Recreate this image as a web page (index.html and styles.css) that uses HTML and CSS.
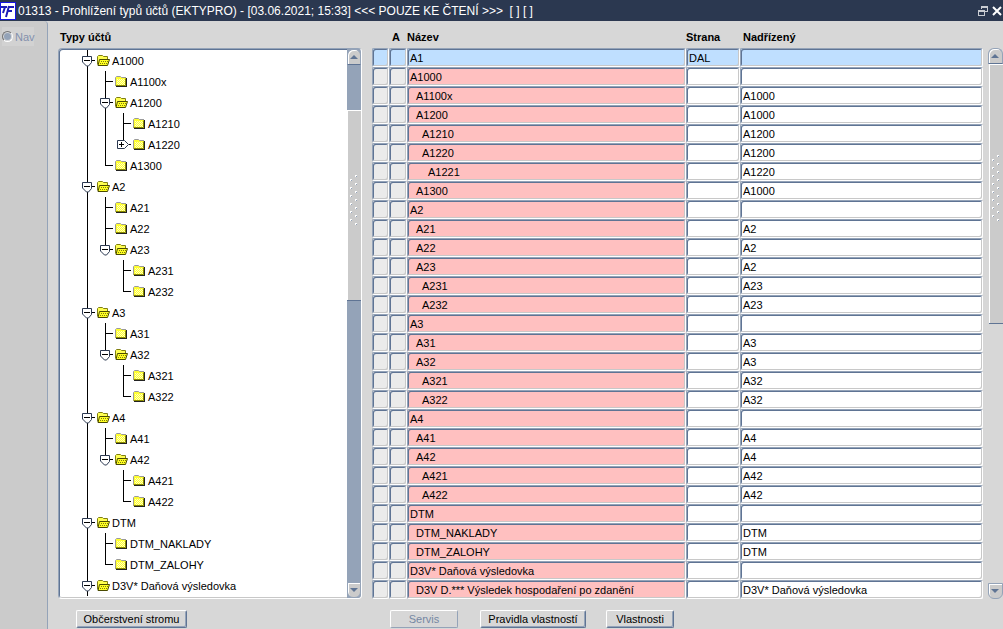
FILE: index.html
```html
<!DOCTYPE html>
<html lang="cs">
<head>
  <meta charset="UTF-8" />
  <meta name="viewport" content="width=device-width, initial-scale=1.0"/>
  <title>Prohlížení typů účtů</title>
  <link rel="stylesheet" href="styles.css">
</head>
<body>
  <svg class="symbols" aria-hidden="true">
    <symbol id="line" viewBox="0 0 18 21">
      <path d="M9 0h1v21h-1z"/>
    </symbol>
    <symbol id="tee" viewBox="0 0 18 21">
      <path d="M9 0h1v21h-1zM9 10h8v1h-8z"/>
    </symbol>
    <symbol id="end" viewBox="0 0 18 21">
      <path d="M9 0h1v11h-1zM9 10h8v1h-8z"/>
    </symbol>
    <symbol id="minus" viewBox="0 0 18 21">
      <path d="M4.500 6.500h9v6l-3 3.500h-2l-4-4z" fill="#fff" stroke="#2b3850"/>
      <path d="M6 10h6v1h-6zM14 10h3v1h-3z"/>
    </symbol>
    <symbol id="plus" viewBox="0 0 18 21">
      <path d="M3.500 6.500h7l4 4-4 4h-7z" fill="#fff" stroke="#2b3850"/>
      <path d="M5 10h5v1h-5zM7 8h1v5h-1zM15 10h2v1h-2z"/>
    </symbol>
    <symbol id="closed" viewBox="0 0 14 21">
      <path d="M2 6h10v9h-10z" fill="#ffff30"/>
      <path d="M3 8.500h8M3 10.500h8M3 12.500h8" stroke="#ffffc0" stroke-dasharray="1 1"/>
      <path d="M4 9.500h8M4 11.500h8M4 13.500h8" stroke="#ffffc0" stroke-dasharray="1 1"/>
      <path d="M1.500 14.500v-8l1-1h4l1 1h4.500" fill="none" stroke="#9a9a9a"/>
      <path d="M1.500 14.500h10v-7" fill="none" stroke="#8a8a00"/>
      <path d="M2 15h11v1h-11zM12 7h1v9h-1z" fill="#222"/>
    </symbol>
    <symbol id="open" viewBox="0 0 14 21">
      <path d="M2 6h9v9h-9z" fill="#ffff50"/>
      <path d="M1.500 14.500v-8l1-1h4l1 1h4v3" fill="none" stroke="#807f10"/>
      <path d="M3.500 9.500h10l-2 6h-9.500z" fill="#ffff20" stroke="#4a4a00"/>
      <path d="M5 11.500h7M4 13.500h7" stroke="#807f10" stroke-dasharray="1 1"/>
    </symbol>
    <symbol id="grip" viewBox="0 0 8 66">
      <path d="M6 0v66" stroke="#fff" stroke-width="2" stroke-dasharray="2 6"/>
      <path d="M1 4v62" stroke="#fff" stroke-width="2" stroke-dasharray="2 6"/>
      <path d="M6.500 1v65" stroke="#94a3b8" stroke-dasharray="1 7"/>
      <path d="M1.500 5v61" stroke="#94a3b8" stroke-dasharray="1 7"/>
    </symbol>
  </svg>

  <header class="titlebar">
    <svg class="logo" width="16" height="18" viewBox="0 0 16 18" aria-hidden="true">
      <path d="M0 0h16v18h-16z" fill="#1515e0"/>
      <path d="M1 1h14v16h-14z" fill="#fff"/>
      <path d="M1 5h6M5 5L3 11" stroke="#1a1ab8" stroke-width="2" fill="none"/>
      <path d="M9 4L6 15M8 5h6M8 9h4" stroke="#1a1ab8" stroke-width="2" fill="none"/>
    </svg>
    <h1>01313 - Prohlížení typů účtů (EKTYPRO) - [03.06.2021; 15:33] &lt;&lt;&lt; POUZE KE ČTENÍ &gt;&gt;&gt;&nbsp; [ ] [ ]</h1>
    <button type="button" class="win-btn" aria-label="Obnovit">
      <svg width="10" height="10" viewBox="0 0 10 10">
        <path d="M3 0h7v6h-3v-1h2v-3h-5v1h-1z" fill="#c9ccd2"/>
        <path d="M0 4h7v6h-7zM1 6v3h5v-3z" fill="#c9ccd2" fill-rule="evenodd"/>
      </svg>
    </button>
    <button type="button" class="win-btn" aria-label="Zavřít">
      <svg width="10" height="10" viewBox="0 0 10 10">
        <path d="M1 1l8 8M9 1l-8 8" stroke="#fff" stroke-width="2"/>
      </svg>
    </button>
  </header>

  <div class="workspace">
    <aside class="sidebar">
      <label class="nav-option">
        <input type="radio" name="mode" disabled checked>
        Nav
      </label>
    </aside>

    <main class="content">
      <div class="panels">
        <section class="tree-panel">
          <h2>Typy účtů</h2>
          <div class="tree-box">
            <ul class="tree" id="tree"></ul>
            <div class="scrollbar">
              <button type="button" class="arrow up" aria-label="Nahoru"></button>
              <div class="track">
                <div class="thumb">
                  <svg width="8" height="50" viewBox="0 0 8 50" aria-hidden="true"><use href="#grip" width="8" height="66"/></svg>
                </div>
              </div>
              <button type="button" class="arrow down" aria-label="Dolů"></button>
            </div>
          </div>
        </section>

        <section class="table-panel">
          <table>
            <colgroup>
              <col class="col-mark"><col class="col-flag"><col class="col-name"><col class="col-side"><col>
            </colgroup>
            <thead>
              <tr><th></th><th>A</th><th>Název</th><th>Strana</th><th>Nadřízený</th></tr>
            </thead>
            <tbody id="rows"></tbody>
          </table>
          <div class="scrollbar plain">
            <button type="button" class="arrow up" aria-label="Nahoru"></button>
            <div class="track">
              <div class="thumb">
                <svg width="8" height="66" viewBox="0 0 8 66" aria-hidden="true"><use href="#grip" width="8" height="66"/></svg>
              </div>
            </div>
            <button type="button" class="arrow down" aria-label="Dolů"></button>
          </div>
        </section>
      </div>

      <footer class="actions">
        <button type="button" class="btn refresh">Občerstvení stromu</button>
        <button type="button" class="btn service" disabled>Servis</button>
        <button type="button" class="btn rules">Pravidla vlastností</button>
        <button type="button" class="btn props">Vlastnosti</button>
      </footer>
    </main>
  </div>

  <script>
    // guides + joint, folder, label
    const nodes = [
      ['-', 'open', 'A1000'],
      ['LT', 'closed', 'A1100x'],
      ['LM', 'open', 'A1200'],
      ['LLT', 'closed', 'A1210'],
      ['LLP', 'closed', 'A1220'],
      ['LE', 'closed', 'A1300'],
      ['-', 'open', 'A2'],
      ['LT', 'closed', 'A21'],
      ['LT', 'closed', 'A22'],
      ['LN', 'open', 'A23'],
      ['L T', 'closed', 'A231'],
      ['L E', 'closed', 'A232'],
      ['-', 'open', 'A3'],
      ['LT', 'closed', 'A31'],
      ['LN', 'open', 'A32'],
      ['L T', 'closed', 'A321'],
      ['L E', 'closed', 'A322'],
      ['-', 'open', 'A4'],
      ['LT', 'closed', 'A41'],
      ['LN', 'open', 'A42'],
      ['L T', 'closed', 'A421'],
      ['L E', 'closed', 'A422'],
      ['-', 'open', 'DTM'],
      ['LT', 'closed', 'DTM_NAKLADY'],
      ['LE', 'closed', 'DTM_ZALOHY'],
      ['-', 'open', 'D3V* Daňová výsledovka']
    ];

    // level, name, side, parent
    const rows = [
      [0, 'A1', 'DAL', ''],
      [0, 'A1000', '', ''],
      [1, 'A1100x', '', 'A1000'],
      [1, 'A1200', '', 'A1000'],
      [2, 'A1210', '', 'A1200'],
      [2, 'A1220', '', 'A1200'],
      [3, 'A1221', '', 'A1220'],
      [1, 'A1300', '', 'A1000'],
      [0, 'A2', '', ''],
      [1, 'A21', '', 'A2'],
      [1, 'A22', '', 'A2'],
      [1, 'A23', '', 'A2'],
      [2, 'A231', '', 'A23'],
      [2, 'A232', '', 'A23'],
      [0, 'A3', '', ''],
      [1, 'A31', '', 'A3'],
      [1, 'A32', '', 'A3'],
      [2, 'A321', '', 'A32'],
      [2, 'A322', '', 'A32'],
      [0, 'A4', '', ''],
      [1, 'A41', '', 'A4'],
      [1, 'A42', '', 'A4'],
      [2, 'A421', '', 'A42'],
      [2, 'A422', '', 'A42'],
      [0, 'DTM', '', ''],
      [1, 'DTM_NAKLADY', '', 'DTM'],
      [1, 'DTM_ZALOHY', '', 'DTM'],
      [0, 'D3V* Daňová výsledovka', '', ''],
      [1, 'D3V D.*** Výsledek hospodaření po zdanění', '', 'D3V* Daňová výsledovka']
    ];

    const use = id => `<use href="#${id}" width="18" height="21"/>`;
    const cell = inner => `<svg width="18" height="21">${inner}</svg>`;
    const handle = (inner, label) =>
      `<button type="button" class="handle" aria-label="${label}">${cell(inner)}</button>`;
    const half = '<path d="M9 0h1v11h-1z"/>';

    const parts = {
      'L': cell(use('line')),
      ' ': cell(''),
      'T': cell(use('tee')),
      'E': cell(use('end')),
      '-': handle(use('line') + use('minus'), 'Sbalit'),
      'M': handle(use('line') + use('minus'), 'Sbalit'),
      'N': handle(half + use('minus'), 'Sbalit'),
      'P': handle(half + use('plus'), 'Rozbalit')
    };

    document.getElementById('tree').innerHTML = nodes.map(([guides, icon, text]) => {
      const lines = [...guides].map(c => parts[c]).join('');
      return `<li>${lines}<svg width="14" height="21"><use href="#${icon}" width="14" height="21"/></svg><span>${text}</span></li>`;
    }).join('');

    document.getElementById('rows').innerHTML = rows.map(([level, name, side, parent], i) =>
      `<tr class="${i === 0 ? 'current' : ''}"><td class="mark"></td><td class="mark"></td>` +
      `<td class="name level-${level}">${name}</td><td>${side}</td><td>${parent}</td></tr>`
    ).join('');
  </script>
</body>
</html>
```
FILE: styles.css
```css
* {
  box-sizing: border-box;
  margin: 0;
  padding: 0;
}

body {
  font-family: "Liberation Sans", Arial, sans-serif;
  font-size: 11px;
  color: #000;
  background: #d7d7d7;
  min-height: 100vh;
  display: flex;
  flex-direction: column;
}

button {
  font: inherit;
  border: none;
  background: none;
}

svg {
  display: block;
  flex: none;
}

.symbols {
  position: absolute;
  width: 0;
  height: 0;
}

.titlebar {
  display: flex;
  align-items: center;
  height: 21px;
  background: #2b3850;
  color: #fff;
}

.titlebar h1 {
  flex: 1;
  margin-left: 2px;
  font-size: 12px;
  font-weight: normal;
  white-space: nowrap;
}

.win-btn {
  width: 16px;
  height: 20px;
  display: flex;
  flex: none;
  align-items: center;
  justify-content: center;
}

.win-btn:last-child {
  width: 12px;
}

.workspace {
  flex: 1;
  display: flex;
}

.sidebar {
  width: 48px;
  flex: none;
  padding: 6px 0 0 2px;
  background: #cbcbcb;
  border-right: 1px solid #94a3b8;
  border-top-right-radius: 4px;
}

.nav-option {
  display: flex;
  align-items: center;
  gap: 2px;
  width: 32px;
  height: 19px;
  background: #d2d2d2;
  color: #8290ad;
}

.nav-option input {
  appearance: none;
  flex: none;
  width: 11px;
  height: 11px;
  border: 1px solid #777;
  border-right-color: #fff;
  border-bottom-color: #fff;
  border-radius: 50%;
  background: #94a3b8;
  box-shadow: inset 0 0 0 1px #d7d7d7;
}

.content {
  flex: 1;
  min-width: 0;
  padding: 6px 0 0 10px;
}

.panels {
  display: flex;
  gap: 10px;
}

.tree-panel {
  flex: none;
  width: 304px;
  display: flex;
  flex-direction: column;
}

.tree-panel h2,
th {
  height: 21px;
  line-height: 21px;
  font-size: 11px;
  font-weight: bold;
  text-align: left;
}

.tree-panel h2 {
  padding-left: 2px;
}

.tree-box {
  flex: 1;
  display: flex;
  overflow: hidden;
  background: #fff;
  border: 1px solid #fff;
  border-top-color: #94a3b8;
  border-left-color: #94a3b8;
  border-radius: 4px;
  box-shadow: inset 1px 1px 0 #5f7494, inset 0 -1px 0 #c8c8c8;
}

.tree {
  flex: 1;
  list-style: none;
  padding: 1px 0 0 19px;
}

.tree li {
  display: flex;
  height: 21px;
  line-height: 22px;
  white-space: nowrap;
}

.tree span {
  padding-left: 2px;
}

.handle {
  width: 18px;
  height: 21px;
  cursor: pointer;
}

.scrollbar {
  flex: none;
  width: 14px;
  display: flex;
  flex-direction: column;
  background: #94a3b8;
}

.arrow {
  position: relative;
  height: 16px;
  background: #cbcbcb;
  border: 1px solid #94a3b8;
  box-shadow: inset 1px 1px 0 #fff;
}

.arrow.up {
  border-bottom-color: #5f7494;
  border-radius: 6px 6px 0 0;
}

.arrow.down {
  border-radius: 0 0 6px 6px;
}

.arrow::after {
  content: "";
  position: absolute;
  left: 2px;
  top: 5px;
  border: 4px solid transparent;
}

.arrow.up::after {
  border-top: none;
  border-bottom-color: #5f7494;
}

.arrow.down::after {
  border-bottom: none;
  border-top-color: #5f7494;
}

.track {
  flex: 1;
}

.thumb {
  display: flex;
  align-items: center;
  justify-content: center;
  height: 37%;
  margin-top: 45px;
  padding-bottom: 10px;
  background: #cbcbcb;
  border-bottom: 1px solid #5f7494;
  box-shadow: inset 1px 1px 0 #fff;
}

.plain {
  width: 15px;
  margin: 21px 0 0 5px;
  background: none;
}

.plain .thumb {
  height: 50%;
  margin-top: 0;
  margin-left: 1px;
}

.table-panel {
  flex: 1;
  min-width: 0;
  display: flex;
}

table {
  flex: 1;
  width: 100%;
  table-layout: fixed;
  border-collapse: separate;
  border-spacing: 0;
}

.col-mark {
  width: 17px;
}

.col-flag {
  width: 18px;
}

.col-name {
  width: 279px;
}

.col-side {
  width: 54px;
}

th:nth-child(2),
th:last-child {
  padding-left: 3px;
}

td {
  height: 19px;
  padding: 1px 0 0 2px;
  line-height: 16px;
  white-space: nowrap;
  overflow: hidden;
  background: #fff;
  border: 1px solid #fff;
  border-top-color: #94a3b8;
  border-left-color: #94a3b8;
  border-radius: 2px;
  box-shadow: inset 1px 1px 0 #5f7494, inset -1px -1px 0 #c8c8c8;
}

.mark {
  background: #ebebeb;
}

.name {
  background: #ffc0c0;
}

.level-1 {
  padding-left: 8px;
}

.level-2 {
  padding-left: 14px;
}

.level-3 {
  padding-left: 20px;
}

.current td {
  background: #bfdfff;
}

.actions {
  display: flex;
  padding: 11px 0 1px 18px;
}

.btn {
  height: 18px;
  line-height: 16px;
  background: #d7d7d7;
  border: 1px solid #5f7494;
  border-top-color: #fff;
  border-left-color: #fff;
  border-radius: 2px;
  box-shadow: inset -1px -1px 0 #94a3b8;
}

.btn:disabled {
  color: #7587a3;
  border-right-color: #94a3b8;
  border-bottom-color: #94a3b8;
  box-shadow: none;
}

.refresh {
  width: 111px;
  margin-right: 203px;
}

.service {
  width: 68px;
  margin-right: 22px;
}

.rules {
  width: 106px;
  margin-right: 20px;
}

.props {
  width: 68px;
}
```
